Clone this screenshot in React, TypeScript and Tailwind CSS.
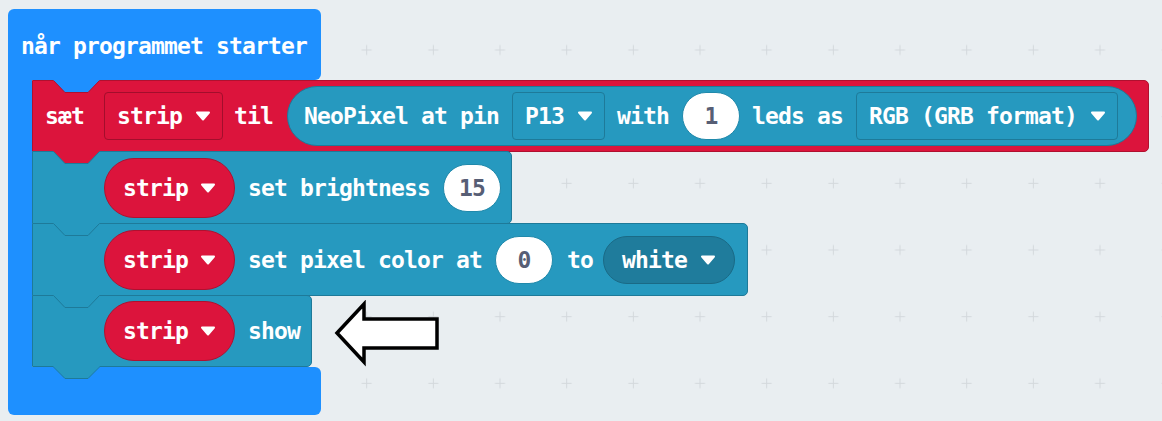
import React from "react";

const BLUE = "#1e90ff";
const RED = "#dc143c";
const RED_DARK = "#b0102f";
const TEAL = "#2699bf";
const TEAL_DARK = "#1e7a99";

function Caret() {
  return (
    <svg width="16" height="10" viewBox="0 0 16 10" className="shrink-0 block">
      <path d="M2 1.5 H14 L8 8.5 Z" fill="white" stroke="white" strokeWidth="2" strokeLinejoin="round" />
    </svg>
  );
}

function T({ children }: { children: React.ReactNode }) {
  return <span className="whitespace-pre text-white">{children}</span>;
}

function Notch({ fill, stroke }: { fill: string; stroke: string }) {
  return (
    <svg className="absolute left-[20px] top-[-1px]" width="48" height="14" viewBox="0 0 48 14">
      <path d="M0 0 L12 12.5 L35 12.5 L47 0 Z" fill={fill} />
      <path d="M0.5 0.5 L12 12.5 L35 12.5 L46.5 0.5" fill="none" stroke={stroke} strokeWidth="1" strokeLinejoin="round" />
    </svg>
  );
}

function BottomTab() {
  return (
    <svg className="absolute left-[20px] bottom-[-13px]" width="48" height="13" viewBox="0 0 48 13">
      <path d="M0 0 H47 L35 12.5 H12 Z" fill={TEAL} />
      <path d="M0.5 1 L12 12.5 H35 L46.5 1" fill="none" stroke={TEAL_DARK} strokeWidth="1" strokeLinejoin="round" />
    </svg>
  );
}

function StripPill() {
  return (
    <div className="flex items-center h-[60px] rounded-full bg-[#dc143c] border border-[#b0102f] pl-[18px] pr-[18px]">
      <T>strip</T>
      <span className="ml-[12px]">
        <Caret />
      </span>
    </div>
  );
}

function NumPill({ v }: { v: string }) {
  return (
    <div className="flex items-center justify-center h-[48px] min-w-[58px] px-[14px] rounded-full bg-white border border-[#2089ab]">
      <span className="whitespace-pre text-[#575e75]">{v}</span>
    </div>
  );
}

function TealDrop({ t }: { t: string }) {
  return (
    <div className="flex items-center h-[48px] rounded-[4px] bg-[#2699bf] border border-[#1e7a99] pl-[12px] pr-[11px]">
      <T>{t}</T>
      <span className="ml-[13px]">
        <Caret />
      </span>
    </div>
  );
}

function Grid() {
  return (
    <svg className="absolute inset-0" width="1162" height="421">
      <defs>
        <pattern id="plus" patternUnits="userSpaceOnUse" x="0" y="16.667" width="66.667" height="66.667">
          <path d="M28.33 33.33 H38.33 M33.33 28.33 V38.33" stroke="#d3d8dc" strokeWidth="1" />
        </pattern>
      </defs>
      <rect width="1162" height="421" fill="url(#plus)" />
    </svg>
  );
}

export default function App() {
  return (
    <div className="relative w-[1162px] h-[421px] bg-[#e9eef1] overflow-hidden font-['DejaVu_Sans_Mono',monospace] font-bold text-[23px] tracking-[-0.85px] leading-[26px]">
      <Grid />
      <div className="relative pl-[8px] pt-[9px] flex flex-col items-start">
        {/* hat */}
        <div className="w-[313px] h-[71px] bg-[#1e90ff] rounded-t-[6px] rounded-br-[6px] flex items-center pl-[13px] pt-[2px]">
          <T>når programmet starter</T>
        </div>
        <div className="flex">
          <div className="w-[24px] bg-[#1e90ff]" />
          <div className="flex flex-col items-start">
            {/* block 1: sæt */}
            <div className="relative flex items-center h-[72px] bg-[#dc143c] border border-[#b0102f] rounded-r-[5px] pl-[12px] pr-[11px]">
              <Notch fill={BLUE} stroke={RED_DARK} />
              <T>sæt</T>
              <div className="ml-[20px] flex items-center h-[48px] rounded-[4px] bg-[#dc143c] border border-[#a30e2c] pl-[12px] pr-[11px]">
                <T>strip</T>
                <span className="ml-[13px]">
                  <Caret />
                </span>
              </div>
              <span className="ml-[11px]">
                <T>til</T>
              </span>
              <div className="ml-[14px] flex items-center h-[60px] rounded-full bg-[#2699bf] border border-[#1e7a99] pl-[16px] pr-[18px]">
                <T>NeoPixel at pin</T>
                <div className="ml-[13px]">
                  <TealDrop t="P13" />
                </div>
                <span className="ml-[12px]">
                  <T>with</T>
                </span>
                <div className="ml-[13px]">
                  <NumPill v="1" />
                </div>
                <span className="ml-[12px]">
                  <T>leds as</T>
                </span>
                <div className="ml-[13px]">
                  <TealDrop t="RGB (GRB format)" />
                </div>
              </div>
            </div>
            {/* block 2 */}
            <div className="relative -mt-[1px] flex items-center h-[73px] bg-[#2699bf] border border-[#1e7a99] rounded-r-[5px] pl-[71px] pr-[10px]">
              <Notch fill={RED} stroke={TEAL_DARK} />
              <StripPill />
              <span className="ml-[13px]">
                <T>set brightness</T>
              </span>
              <div className="ml-[13px]">
                <NumPill v="15" />
              </div>
            </div>
            {/* block 3 */}
            <div className="relative -mt-[1px] flex items-center h-[73px] bg-[#2699bf] border border-[#1e7a99] rounded-r-[5px] pl-[71px] pr-[12px]">
              <Notch fill={TEAL} stroke={TEAL_DARK} />
              <StripPill />
              <span className="ml-[13px]">
                <T>set pixel color at</T>
              </span>
              <div className="ml-[13px]">
                <NumPill v="0" />
              </div>
              <span className="ml-[14px]">
                <T>to</T>
              </span>
              <div className="ml-[10px] flex items-center h-[48px] rounded-full bg-[#1f7c9c] border border-[#1a6a86] pl-[18px] pr-[18px]">
                <T>white</T>
                <span className="ml-[13px]">
                  <Caret />
                </span>
              </div>
            </div>
            {/* block 4 */}
            <div className="relative -mt-[1px] flex items-center h-[72px] bg-[#2699bf] border border-[#1e7a99] rounded-r-[5px] pl-[71px] pr-[11px]">
              <Notch fill={TEAL} stroke={TEAL_DARK} />
              <StripPill />
              <span className="ml-[13px]">
                <T>show</T>
              </span>
              <BottomTab />
            </div>
          </div>
        </div>
        <div className="w-[313px] h-[48px] bg-[#1e90ff] rounded-b-[6px] rounded-tr-[6px]" />
      </div>
      {/* annotation arrow */}
      <svg className="absolute left-[333px] top-[300px]" width="108" height="68" viewBox="0 0 108 68">
        <path
          d="M4 33 L31 4 L31 19 L104 19 L104 48 L31 48 L31 62 Z"
          fill="white"
          stroke="black"
          strokeWidth="3.5"
          strokeLinejoin="miter"
        />
      </svg>
    </div>
  );
}
